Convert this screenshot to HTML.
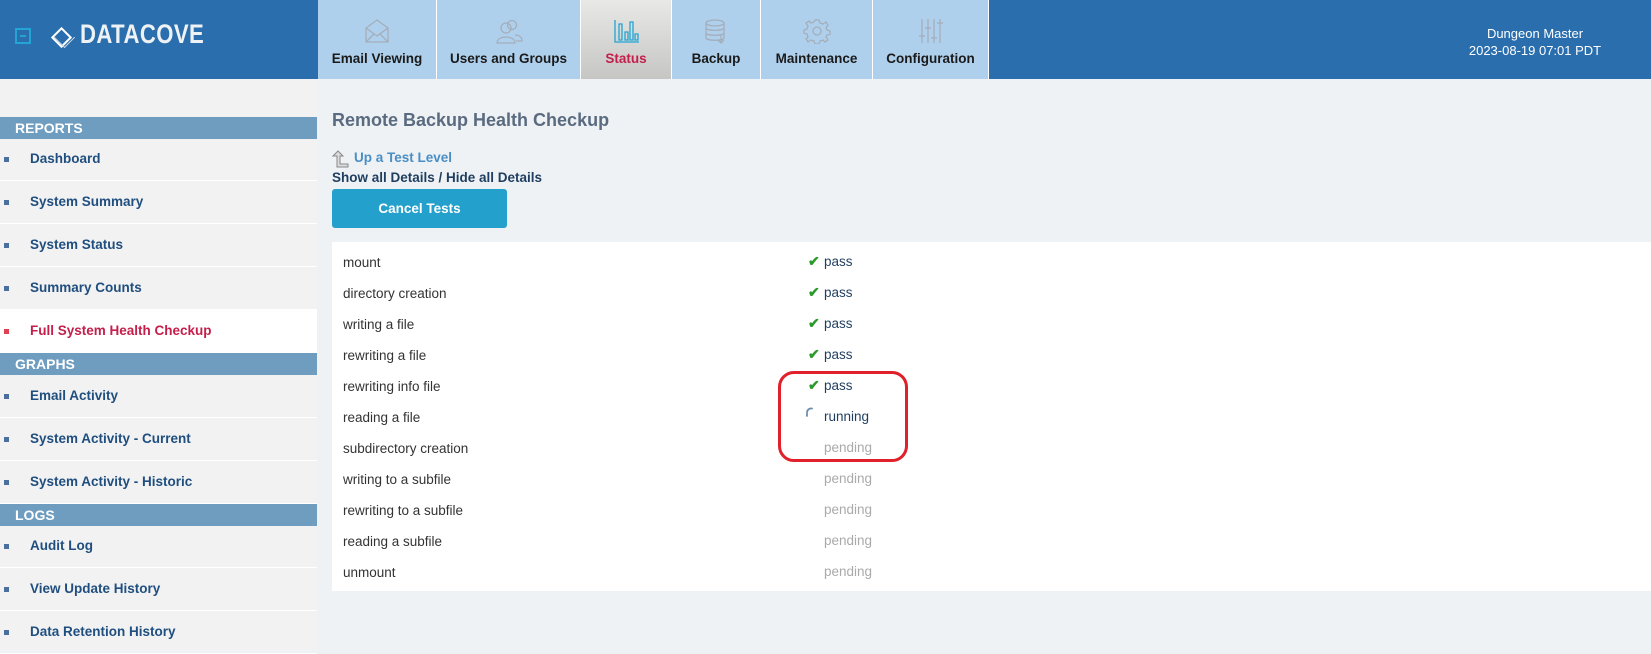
<!DOCTYPE html>
<html><head><meta charset="utf-8"><style>
*{margin:0;padding:0;box-sizing:border-box}
body{width:1651px;height:651px;overflow:hidden;background:#eef2f5;font-family:"Liberation Sans",sans-serif;position:relative}
.hdr{position:absolute;left:0;top:0;width:1651px;height:79px;background:#2a6ead}
.tab{position:absolute;top:0;height:79px;background:#afd0ec;border-right:1px solid #fff;text-align:center;font-weight:bold;font-size:13.5px;color:#1a1a1a}
.tab span{position:absolute;left:0;right:0;top:51px}
.tab svg{position:absolute;left:50%;top:18px;margin-left:-14px}
.side{position:absolute;left:0;top:79px;width:317px;height:572px;background:#f2f2f2}
.bar{position:absolute;left:0;width:317px;height:22px;background:#6f9dc0;color:#fff;font-weight:bold;font-size:14px;padding-left:15px;line-height:22px}
.it{position:absolute;left:0;width:317px;height:43px;border-bottom:1px solid #fff;font-weight:bold;font-size:13.5px;color:#1f4e7f;line-height:42px;padding-left:30px}
.it:before{content:"";position:absolute;left:4px;top:19px;width:5px;height:5px;background:#4a6f9c}
.it.act{background:#fff;color:#c41e4a}
.it.act:before{background:#e04050}
.row{position:absolute;left:343px;font-size:13.5px;color:#333}
.st{position:absolute;left:824px;font-size:13.5px;color:#1f3e5f}
.pend{color:#aaa}
.ck{position:absolute;left:808px;color:#2a9a2a;font-size:14px;font-weight:bold}
</style></head><body>
<div class="hdr">
<div style="position:absolute;left:15px;top:28px;width:16px;height:16px;border:2px solid #23a4d4"><div style="position:absolute;left:3px;top:5px;width:6px;height:2px;background:#23a4d4"></div></div>
<div style="position:absolute;left:54px;top:30px;width:15px;height:15px;border:2px solid #fff;transform:rotate(45deg)"></div>
<div style="position:absolute;left:57px;top:30px;width:15px;height:15px;border:1.5px solid #c9d6e4;transform:rotate(45deg);border-left:none;border-top:none"></div>
<div style="position:absolute;left:80px;top:19px;font-size:27px;font-weight:bold;color:#eef2f5;transform:scaleX(0.82);transform-origin:left;letter-spacing:0.5px">DATACOVE</div>
<div style="position:absolute;left:1440px;top:25px;width:190px;text-align:center;color:#fff;font-size:13px;line-height:17px">Dungeon Master<br>2023-08-19 07:01 PDT</div>
</div>
<div class="tab" style="left:318px;width:119px"><svg width="28" height="26" viewBox="0 0 28 26" fill="none" stroke="#a4aebb" stroke-width="1.3"><path d="M3 10 L14 2 L25 10 V24 H3 Z M3 10 L14 18 L25 10 M3 24 L11 16 M25 24 L17 16"/></svg><span>Email Viewing</span></div>
<div class="tab" style="left:437px;width:144px"><svg width="28" height="26" viewBox="0 0 28 26" fill="none" stroke="#a4aebb" stroke-width="1.3"><circle cx="11" cy="10" r="5"/><path d="M2 25 C2 17 20 17 20 25 Z"/><circle cx="17" cy="7" r="4.5"/><path d="M20 17 C24 17 27 19 27 23 H21"/></svg><span>Users and Groups</span></div>
<div class="tab" style="left:581px;width:91px;background:linear-gradient(#e8e8e6,#c6c6c4);color:#c41e4a"><svg width="28" height="26" viewBox="0 0 28 26" fill="none" stroke="#23a4d4" stroke-width="1.3"><path d="M3 2 V24 H27 M7 6 V22 H10 V6 Z M13 14 V22 H16 V14Z M18 4 V22 H21 V4Z M23 16 V22 H26 V16Z"/></svg><span>Status</span></div>
<div class="tab" style="left:672px;width:89px"><svg width="28" height="26" viewBox="0 0 28 26" fill="none" stroke="#a4aebb" stroke-width="1.3"><ellipse cx="13" cy="5" rx="9" ry="3"/><path d="M4 5 V20 C4 23 22 23 22 20 V5 M4 10 C4 13 22 13 22 10 M4 15 C4 18 22 18 22 15 M19 17 V25 M16 22 L19 25 L22 22"/></svg><span>Backup</span></div>
<div class="tab" style="left:761px;width:112px"><svg width="28" height="26" viewBox="0 0 28 26" fill="none" stroke="#a4aebb" stroke-width="1.3"><circle cx="14" cy="13" r="4"/><path d="M12 2 H16 L17 5 L20 6 L23 4 L25 7 L23 10 L24 12 L27 13 V16 L24 17 L23 19 L25 22 L22 24 L20 22 L17 23 L16 26 H12 L11 23 L8 22 L5 24 L3 21 L5 19 L4 16 L1 15 V12 L4 11 L5 8 L3 5 L6 3 L8 5 L11 4 Z"/></svg><span>Maintenance</span></div>
<div class="tab" style="left:873px;width:116px"><svg width="28" height="26" viewBox="0 0 28 26" fill="none" stroke="#a4aebb" stroke-width="1.3"><path d="M5 1 V25 M11 1 V25 M17 1 V25 M23 1 V25 M2 18 H8 M8 10 H14 M14 20 H20 M20 5 H26"/></svg><span>Configuration</span></div>

<div class="side"></div>
<div class="bar" style="top:117px">REPORTS</div>
<div class="it" style="top:138px">Dashboard</div>
<div class="it" style="top:181px">System Summary</div>
<div class="it" style="top:224px">System Status</div>
<div class="it" style="top:267px">Summary Counts</div>
<div class="it act" style="top:310px">Full System Health Checkup</div>
<div class="bar" style="top:353px">GRAPHS</div>
<div class="it" style="top:375px">Email Activity</div>
<div class="it" style="top:418px">System Activity - Current</div>
<div class="it" style="top:461px">System Activity - Historic</div>
<div class="bar" style="top:504px">LOGS</div>
<div class="it" style="top:525px">Audit Log</div>
<div class="it" style="top:568px">View Update History</div>
<div class="it" style="top:611px">Data Retention History</div>

<div style="position:absolute;left:332px;top:110px;font-size:18px;font-weight:bold;color:#5a6b80">Remote Backup Health Checkup</div>
<svg style="position:absolute;left:332px;top:150px" width="18" height="18" viewBox="0 0 18 18" fill="#ddd" stroke="#888" stroke-width="1"><path d="M6 1 L11 6 H8 V14 H16 V17 H5 V6 H1 Z"/></svg>
<div style="position:absolute;left:354px;top:150px;font-size:13.5px;font-weight:bold;color:#4a8ec4">Up a Test Level</div>
<div style="position:absolute;left:332px;top:170px;font-size:13.5px;font-weight:bold;color:#1f3e5f">Show all Details / Hide all Details</div>
<div style="position:absolute;left:332px;top:189px;width:175px;height:39px;background:#23a1cc;border-radius:3px;color:#fff;font-weight:bold;font-size:13.5px;text-align:center;line-height:39px">Cancel Tests</div>

<div style="position:absolute;left:332px;top:242px;width:1319px;height:349px;background:#fff"></div>
<div class="row" style="top:255px">mount</div><span class="ck" style="top:253px">✔</span><div class="st" style="top:254px">pass</div>
<div class="row" style="top:286px">directory creation</div><span class="ck" style="top:284px">✔</span><div class="st" style="top:285px">pass</div>
<div class="row" style="top:317px">writing a file</div><span class="ck" style="top:315px">✔</span><div class="st" style="top:316px">pass</div>
<div class="row" style="top:348px">rewriting a file</div><span class="ck" style="top:346px">✔</span><div class="st" style="top:347px">pass</div>
<div class="row" style="top:379px">rewriting info file</div><span class="ck" style="top:377px">✔</span><div class="st" style="top:378px">pass</div>
<div class="row" style="top:410px">reading a file</div><svg style="position:absolute;left:805px;top:407px" width="8" height="10" viewBox="0 0 8 10" fill="none" stroke="#6a8cb0" stroke-width="1.8"><path d="M7 1.5 C4 1 2 3 2 6 M2 7 V9" stroke-linecap="round"/></svg><div class="st" style="top:409px">running</div>
<div class="row" style="top:441px">subdirectory creation</div><div class="st pend" style="top:440px">pending</div>
<div class="row" style="top:472px">writing to a subfile</div><div class="st pend" style="top:471px">pending</div>
<div class="row" style="top:503px">rewriting to a subfile</div><div class="st pend" style="top:502px">pending</div>
<div class="row" style="top:534px">reading a subfile</div><div class="st pend" style="top:533px">pending</div>
<div class="row" style="top:565px">unmount</div><div class="st pend" style="top:564px">pending</div>
<div style="position:absolute;left:778px;top:371px;width:130px;height:91px;border:3px solid #e0202a;border-radius:16px"></div>
</body></html>
